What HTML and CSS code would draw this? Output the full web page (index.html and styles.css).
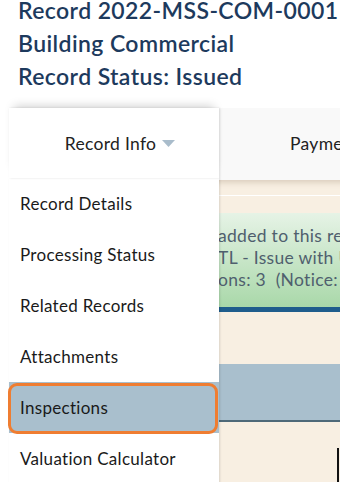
FILE: index.html
```html
<!DOCTYPE html>
<html lang="en">
<head>
<meta charset="utf-8">
<title>Record 2022-MSS-COM-0001</title>
<link rel="stylesheet" href="styles.css">
</head>
<body>
<header class="record-head">
  <h1 class="head-line">Record 2022-MSS-COM-0001</h1>
  <div class="head-line">Building Commercial</div>
  <div class="head-line">Record Status: Issued</div>
</header>
<main class="record-main">
  <nav class="tabs">
    <div class="tab tab-open">
      <span>Record Info</span>
      <svg class="caret" width="13" height="7" viewBox="0 0 13 7" aria-hidden="true"><path d="M0 0H13L6.5 7Z" fill="#a9bccb"/></svg>
    </div>
    <div class="tab"><span>Payments</span></div>
  </nav>
  <section class="content">
    <div class="strip"></div>
    <div class="notice">
      <p class="msg-line">added to this record.</p>
      <p class="msg-line">TL - Issue with Utility</p>
      <p class="msg-line">ons: 3&nbsp;&nbsp;(Notice: 3)</p>
    </div>
    <div class="notice-bar"></div>
    <div class="gap"></div>
    <div class="section-bar"></div>
    <div class="table-area"><div class="table-edge"></div></div>
  </section>
  <ul class="dropdown">
    <li class="dd-item">Record Details</li>
    <li class="dd-item">Processing Status</li>
    <li class="dd-item">Related Records</li>
    <li class="dd-item">Attachments</li>
    <li class="dd-item dd-active">Inspections</li>
    <li class="dd-item">Valuation Calculator</li>
  </ul>
</main>
</body>
</html>
```
FILE: styles.css
```css
* { box-sizing: border-box; }
html, body { margin: 0; padding: 0; background: #fff; }
body {
  font-family: Lato, "Open Sans", sans-serif;
  width: 340px;
  height: 482px;
  overflow: hidden;
}
.record-head {
  margin-top: -6px;
  padding-left: 18px;
  white-space: nowrap;
}
.head-line {
  margin: 0;
  font-size: 23px;
  line-height: 33px;
  font-weight: 600;
  letter-spacing: 0.4px;
  color: #1d3a5d;
}
.record-main {
  position: relative;
  margin-top: 15px;
  margin-left: 9px;
  width: 340px;
}
.tabs {
  display: flex;
  height: 72px;
  background: #f9f9f9;
}
.tab {
  display: flex;
  align-items: center;
  justify-content: center;
  gap: 6px;
  font-size: 17.5px;
  letter-spacing: 0.3px;
  color: #222;
  height: 70px;
  white-space: nowrap;
}
.tab-open {
  width: 210px;
  flex: none;
  background: #fff;
  padding-left: 12px;
  box-shadow: 0 -7px 9px -5px rgba(0,0,0,0.18), 1px 0 2px rgba(0,0,0,0.12);
  position: relative;
  z-index: 3;
}
.tab-open .caret { margin-top: 1px; }
.tab:not(.tab-open) { padding-left: 71px; justify-content: flex-start; }
.content {
  background: #f8efe2;
}
.strip {
  height: 33px;
  box-shadow: inset 0 6px 6px -4px rgba(120,90,60,0.25);
  background: linear-gradient(#f8efe2 0 15px, #fff 15px 16px, #f8efe2 16px);
}
.notice {
  height: 94px;
  padding-top: 12px;
  padding-left: 209px;
  background: linear-gradient(#e6f3e6, #a9d8a9);
  color: #4f5f6e;
  font-size: 17.5px;
  letter-spacing: 0.3px;
  line-height: 22px;
}
.msg-line {
  margin: 0;
  white-space: nowrap;
}
.notice-bar { height: 5px; background: #1f5d8c; }
.gap { height: 52px; }
.section-bar {
  height: 58px;
  background: #a9bfcd;
  border-bottom: 2px solid #4e6978;
}
.table-area {
  height: 70px;
  display: flex;
  padding-top: 26px;
}
.table-edge {
  margin-left: 328px;
  width: 2px;
  background: #111;
}
.dropdown {
  position: absolute;
  top: 70px;
  left: 0;
  width: 210px;
  margin: 0;
  padding: 0;
  list-style: none;
  background: #fff;
  box-shadow: 1px 0 2px rgba(0,0,0,0.12);
  z-index: 2;
}
.dd-item {
  position: relative;
  height: 51px;
  line-height: 51px;
  padding-left: 11px;
  font-size: 17px;
  letter-spacing: 0.3px;
  color: #1a1a1a;
  white-space: nowrap;
}
.dd-active {
  background: #a9bfcd;
}
.dd-active::after {
  content: "";
  position: absolute;
  top: 1px;
  bottom: -1px;
  left: -1px;
  right: 1px;
  border: 3px solid #ef7d31;
  border-radius: 9px;
}
```
